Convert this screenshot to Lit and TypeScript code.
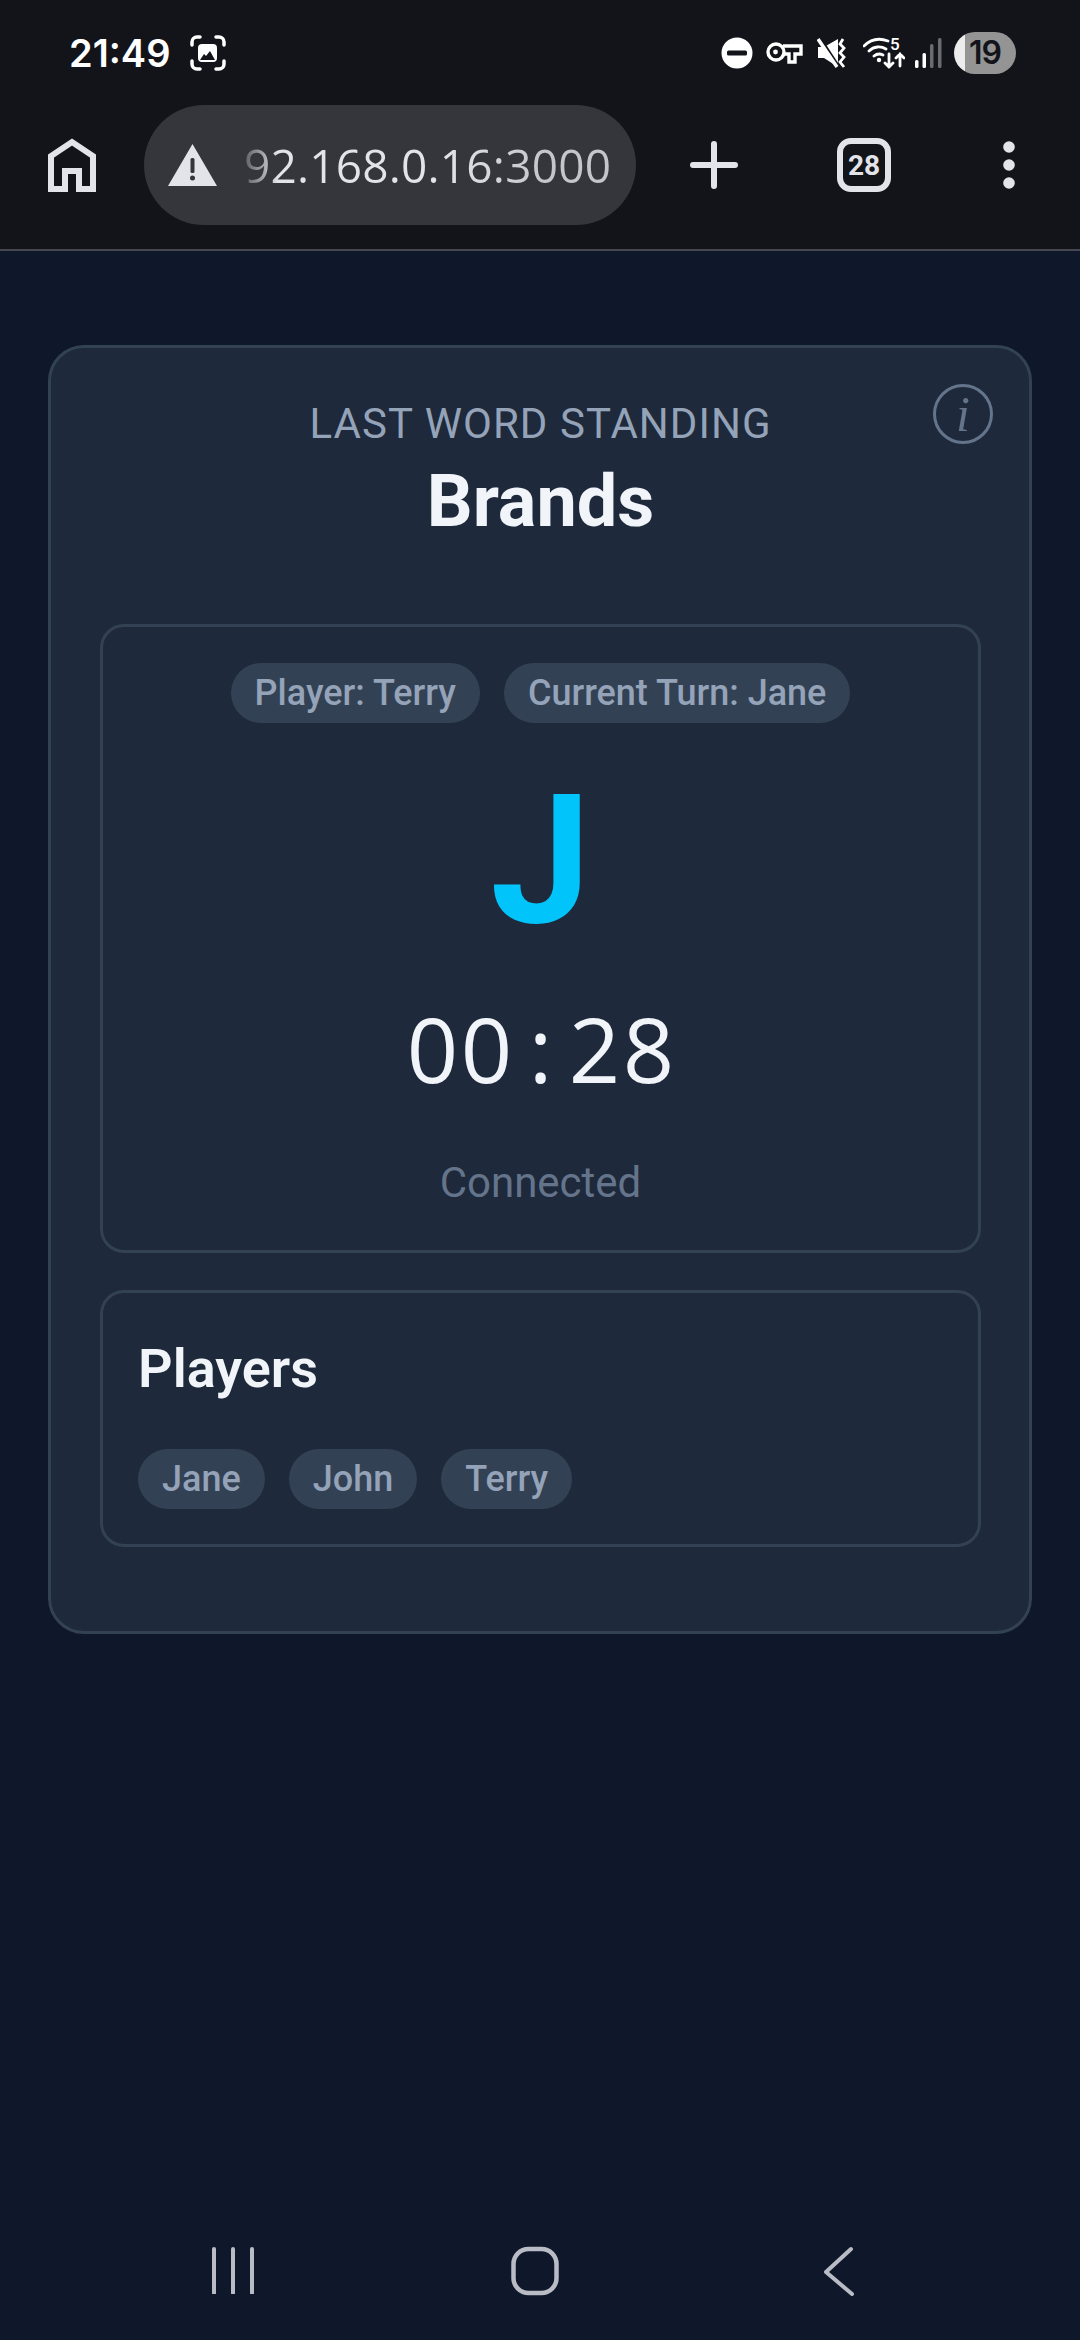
import { LitElement, html, css } from 'lit'
import { customElement } from 'lit/decorators.js'

const TIMER = '00:28'
const PLAYERS = ['Jane', 'John', 'Terry']

@customElement('app-root')
export class AppRoot extends LitElement {
  static styles = css`
    :host {
      display: flex;
      flex-direction: column;
      width: 1080px;
      height: 2340px;
      background: #0f172a;
      font-family: Roboto, 'Noto Sans', sans-serif;
      overflow: hidden;
    }

    .chrome {
      background: #12141a;
      border-bottom: 2px solid #45464f;
      height: 251px;
      box-sizing: border-box;
      flex-shrink: 0;
    }

    .status {
      height: 105px;
      display: flex;
      align-items: center;
      padding-left: 69px;
      color: #fff;
    }

    .clock {
      font-family: Inter, Roboto, sans-serif;
      font-size: 38px;
      font-weight: 600;
      margin-right: 20px;
    }

    .status-right {
      margin-left: auto;
      margin-right: 64px;
      display: flex;
      align-items: center;
    }

    .status-right svg {
      display: block;
    }

    .key {
      margin-left: 13px;
    }

    .mute {
      margin-left: 14px;
    }

    .wifi {
      margin-left: 16px;
    }

    .signal {
      margin-left: 10px;
    }

    .battery {
      margin-left: 12px;
      width: 62px;
      height: 42px;
      border-radius: 21px;
      background: linear-gradient(90deg, #ececec 0 11px, #949494 11px);
      color: #12141a;
      font-family: Inter, Roboto, sans-serif;
      font-size: 32px;
      font-weight: 600;
      letter-spacing: -1px;
      display: flex;
      align-items: center;
      justify-content: center;
    }

    .toolbar {
      height: 120px;
      display: flex;
      align-items: center;
      color: #e3e4e9;
    }

    .home {
      margin-left: 48px;
      margin-right: 48px;
      display: block;
    }

    .omnibox {
      width: 492px;
      height: 120px;
      border-radius: 60px;
      background: #35363b;
      display: flex;
      align-items: center;
      box-sizing: border-box;
      padding-left: 24px;
      flex-shrink: 0;
    }

    .url {
      font-family: 'Open Sans', Roboto, sans-serif;
      font-size: 46px;
      margin-left: 27px;
      white-space: nowrap;
      letter-spacing: 0.2px;
      background: linear-gradient(90deg, #5d5e63 0, #a9aaae 20px, #e3e4e9 34px, #e3e4e9 200px, #c5c6cc 300px);
      -webkit-background-clip: text;
      background-clip: text;
      color: transparent;
    }

    .plus {
      margin-left: 54px;
      display: block;
    }

    .tabs {
      margin-left: 99px;
      width: 54px;
      height: 54px;
      box-sizing: border-box;
      border: 6px solid #e3e4e9;
      border-radius: 14px;
      display: flex;
      align-items: center;
      justify-content: center;
      font-size: 28px;
      font-weight: 700;
      flex-shrink: 0;
    }

    .more {
      margin-left: 112px;
      display: block;
    }

    main {
      padding: 94px 48px 0;
    }

    .card {
      position: relative;
      background: #1e293b;
      border: 3px solid #334155;
      border-radius: 36px;
      padding: 48px 48px 84px 49px;
      display: flex;
      flex-direction: column;
      box-sizing: border-box;
      height: 1289px;
    }

    .info {
      position: absolute;
      top: 36px;
      right: 36px;
      width: 60px;
      height: 60px;
      box-sizing: border-box;
      border: 3px solid #64748b;
      border-radius: 50%;
      color: #64748b;
      font-family: 'Liberation Serif', serif;
      font-style: italic;
      font-size: 50px;
      line-height: 1;
      display: flex;
      align-items: center;
      justify-content: center;
    }

    header {
      text-align: center;
      height: 228px;
    }

    .eyebrow {
      font-size: 42px;
      line-height: 48px;
      letter-spacing: 1.05px;
      color: #94a3b8;
      margin-top: 4px;
    }

    h1 {
      margin: 12px 0 0;
      font-size: 72px;
      line-height: 84px;
      font-weight: 700;
      color: #f1f5f9;
    }

    .panel {
      border: 3px solid #334155;
      border-radius: 24px;
      box-sizing: border-box;
    }

    .game {
      height: 629px;
      display: flex;
      flex-direction: column;
      align-items: center;
      padding-top: 36px;
    }

    .pills {
      display: flex;
      gap: 24px;
    }

    .pill {
      height: 60px;
      border-radius: 30px;
      background: #334155;
      color: #94a3b8;
      font-size: 36px;
      font-weight: 500;
      padding: 0 24px;
      display: flex;
      align-items: center;
    }

    .letter {
      font-size: 180px;
      line-height: 200px;
      font-weight: 700;
      color: #00c4fa;
      margin-top: 38px;
    }

    .timer {
      display: flex;
      font-family: 'Open Sans', Roboto, sans-serif;
      font-size: 90px;
      line-height: 100px;
      color: #f1f5f9;
      margin-top: 37px;
    }

    .timer span {
      width: 54px;
      text-align: center;
    }

    .connection {
      font-size: 42px;
      line-height: 48px;
      color: #64748b;
      margin-top: 61px;
    }

    .players {
      margin-top: 37px;
      height: 257px;
      padding: 44px 36px 0 35px;
    }

    h2 {
      margin: 0;
      font-size: 54px;
      line-height: 64px;
      font-weight: 600;
      color: #f1f5f9;
    }

    .players .pills {
      margin-top: 48px;
    }

    nav {
      margin-top: auto;
      height: 120px;
      display: flex;
      align-items: flex-start;
      color: #b9bcc5;
      flex-shrink: 0;
    }

    nav svg {
      display: block;
      margin-top: 26px;
    }

    .nav-recent {
      margin-left: 211px;
    }

    .nav-home {
      margin-left: 256px;
    }

    .nav-back {
      margin-left: 264px;
    }
  `

  render() {
    return html`
      <div class="chrome">
        <div class="status">
          <span class="clock">21:49</span>
          <svg width="36" height="36" viewBox="0 0 36 36" fill="none" stroke="#fff" stroke-width="3.5" stroke-linecap="round">
            <path d="M2 10V7a5 5 0 0 1 5-5h3M26 2h3a5 5 0 0 1 5 5v3M34 26v3a5 5 0 0 1-5 5h-3M10 34H7a5 5 0 0 1-5-5v-3"/>
            <rect x="8" y="9" width="19" height="18" rx="4" fill="#fff" stroke="none"/>
            <path d="M10 25l4-6 2 2 4-5 5 9z" fill="#12141a" stroke="none"/>
          </svg>
          <div class="status-right">
            <svg width="32" height="32" viewBox="0 0 32 32">
              <circle cx="16" cy="16" r="15.5" fill="#fff"/>
              <rect x="6" y="13.500" width="20" height="5" rx="1.500" fill="#12141a"/>
            </svg>
            <svg class="key" width="37" height="22" viewBox="0 0 37 22" fill="none" stroke="#fff" stroke-width="3.400">
              <circle cx="10" cy="10" r="8"/>
              <circle cx="9.500" cy="10" r="2.400" fill="#fff" stroke="none"/>
              <path d="M17 4h18v8h-6v8h-6v-8h-6"/>
            </svg>
            <svg class="mute" width="30" height="30" viewBox="0 0 30 30">
              <path d="M1 9h6L21 1v28L7 20H1z" fill="#fff"/>
              <path d="M3 0l19 29" stroke="#12141a" stroke-width="3"/>
              <path d="M1 1l19 28" stroke="#fff" stroke-width="3.500"/>
              <path d="M26 1l-3 5 4 4-4 5 4 4-4 5 4 5" fill="none" stroke="#fff" stroke-width="2.800"/>
            </svg>
            <svg class="wifi" width="42" height="36" viewBox="0 -2 42 36" fill="none" stroke="#fff" stroke-width="2.800" stroke-linecap="round">
              <path d="M1 9c7-7 16-8 24-5M6 14c5-5 12-5 17-2M11 19c3-2.500 6-2.500 9-1"/>
              <circle cx="16" cy="23" r="2.200" fill="#fff" stroke="none"/>
              <path d="M26 17v13M22 26l4 4 4-4M37 29V17M33 21l4-4 4 4"/>
              <text x="27" y="13" fill="#fff" stroke="none" font-family="Roboto, sans-serif" font-size="17" font-weight="500">5</text>
            </svg>
            <svg class="signal" width="27" height="30" viewBox="0 0 27 30">
              <rect x="0" y="22" width="3.500" height="8" rx="1.500" fill="#fff"/>
              <rect x="7.500" y="15" width="3.500" height="15" rx="1.500" fill="#fff"/>
              <rect x="15" y="6" width="3.500" height="24" rx="1.500" fill="#6a6b70"/>
              <rect x="23" y="0" width="3.500" height="30" rx="1.500" fill="#6a6b70"/>
            </svg>
            <div class="battery">19</div>
          </div>
        </div>
        <div class="toolbar">
          <svg class="home" width="48" height="54" viewBox="0 0 48 54" fill="none" stroke="currentColor" stroke-width="6">
            <path d="M3 51V18L24 4l21 14v33H31V33H17v18z"/>
          </svg>
          <div class="omnibox">
            <svg width="49" height="42" viewBox="0 0 49 42">
              <path d="M24.500 0L49 42H0z" fill="#e3e4e9"/>
              <rect x="22.500" y="14" width="4" height="15" rx="1.500" fill="#35363b"/>
              <circle cx="24.500" cy="34" r="2.500" fill="#35363b"/>
            </svg>
            <span class="url">92.168.0.16:3000</span>
          </div>
          <svg class="plus" width="48" height="48" viewBox="0 0 48 48" stroke="currentColor" stroke-width="6" stroke-linecap="round">
            <path d="M24 3v42M3 24h42"/>
          </svg>
          <div class="tabs">28</div>
          <svg class="more" width="12" height="48" viewBox="0 0 12 48" fill="currentColor">
            <circle cx="6" cy="6" r="5.800"/>
            <circle cx="6" cy="24" r="5.800"/>
            <circle cx="6" cy="42" r="5.800"/>
          </svg>
        </div>
      </div>

      <main>
        <section class="card">
          <div class="info">i</div>
          <header>
            <div class="eyebrow">LAST WORD STANDING</div>
            <h1>Brands</h1>
          </header>
          <div class="panel game">
            <div class="pills">
              <span class="pill">Player: Terry</span>
              <span class="pill">Current Turn: Jane</span>
            </div>
            <div class="letter">J</div>
            <div class="timer">${[...TIMER].map((c) => html`<span>${c}</span>`)}</div>
            <div class="connection">Connected</div>
          </div>
          <div class="panel players">
            <h2>Players</h2>
            <div class="pills">
              ${PLAYERS.map((p) => html`<span class="pill">${p}</span>`)}
            </div>
          </div>
        </section>
      </main>

      <nav>
        <svg class="nav-recent" width="44" height="48" viewBox="0 0 44 48" stroke="currentColor" stroke-width="4" stroke-linecap="round">
          <path d="M3 3v44M22 3v44M41 3v44"/>
        </svg>
        <svg class="nav-home" width="48" height="50" viewBox="0 0 48 50" fill="none" stroke="currentColor" stroke-width="4.500">
          <rect x="2.500" y="3" width="43" height="44" rx="15"/>
        </svg>
        <svg class="nav-back" width="32" height="50" viewBox="0 0 32 50" fill="none" stroke="currentColor" stroke-width="4" stroke-linecap="round" stroke-linejoin="round">
          <path d="M28 3L3 26l26 22"/>
        </svg>
      </nav>
    `
  }
}
